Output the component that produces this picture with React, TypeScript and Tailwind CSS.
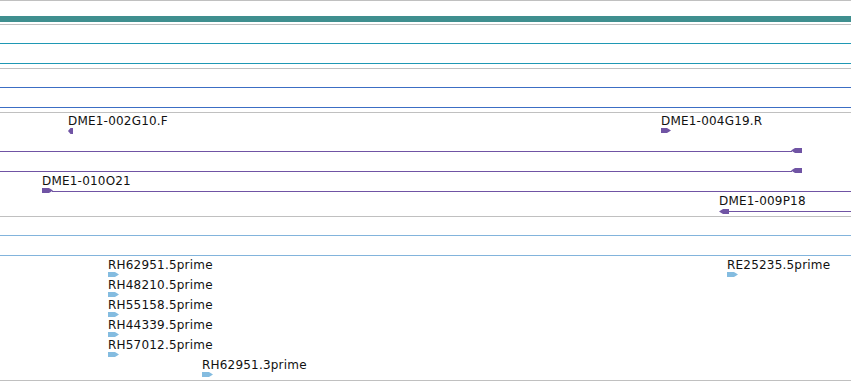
const purple = '#7054a4'
const lightBlue = '#84bce0'

type Dir = 'left' | 'right'

function Arrow({ dir, w, h, color, x, y }: { dir: Dir; w: number; h: number; color: string; x: number; y: number }) {
  const tip = Math.min(4, w / 2)
  const pts =
    dir === 'right'
      ? `0,0 ${w - tip},0 ${w},${h / 2} ${w - tip},${h} 0,${h}`
      : `${w},0 ${tip},0 0,${h / 2} ${tip},${h} ${w},${h}`
  return (
    <svg className="absolute" style={{ left: x, top: y }} width={w} height={h} viewBox={`0 0 ${w} ${h}`}>
      <polygon points={pts} fill={color} />
    </svg>
  )
}

function Label({ x, y, text }: { x: number; y: number; text: string }) {
  return (
    <div
      className="absolute whitespace-nowrap text-[12px] leading-[14px] tracking-[0.2px] text-[#111] font-['DejaVu_Sans',sans-serif]"
      style={{ left: x, top: y }}
    >
      {text}
    </div>
  )
}

function HLine({ x, y, w, color }: { x: number; y: number; w: number; color: string }) {
  return <div className="absolute h-px" style={{ left: x, top: y, width: w, background: color }} />
}

const estRows = [
  { x: 108, text: 'RH62951.5prime' },
  { x: 108, text: 'RH48210.5prime' },
  { x: 108, text: 'RH55158.5prime' },
  { x: 108, text: 'RH44339.5prime' },
  { x: 108, text: 'RH57012.5prime' },
  { x: 202, text: 'RH62951.3prime' },
]

export default function App() {
  return (
    <div className="w-[851px] h-[381px] bg-white overflow-hidden flex flex-col">
      <div className="h-px bg-[#c0c0c0]" />
      <div className="h-[15px]" />
      <div className="h-[6px] bg-[#3f8f8f]" />
      <div className="h-[2px]" />
      <div className="h-px bg-[#c0c0c0]" />
      <div className="h-[18px]" />
      <div className="h-px bg-[#1f98b4]" />
      <div className="h-[19px]" />
      <div className="h-px bg-[#1f98b4]" />
      <div className="h-[4px]" />
      <div className="h-px bg-[#c0c0c0]" />
      <div className="h-[18px]" />
      <div className="h-px bg-[#3c6ec4]" />
      <div className="h-[19px]" />
      <div className="h-px bg-[#3c6ec4]" />
      <div className="h-[4px]" />
      <div className="h-px bg-[#c0c0c0]" />

      {/* BAC ends track */}
      <div className="relative h-[103px] shrink-0">
        <Label x={68} y={1} text="DME1-002G10.F" />
        <Arrow dir="left" w={5} h={6} color={purple} x={68} y={15} />
        <Label x={661} y={1} text="DME1-004G19.R" />
        <Arrow dir="right" w={10} h={5} color={purple} x={661} y={15} />

        <HLine x={0} y={38} w={792} color={purple} />
        <Arrow dir="left" w={11} h={5} color={purple} x={791} y={35} />
        <HLine x={0} y={58} w={792} color={purple} />
        <Arrow dir="left" w={11} h={5} color={purple} x={791} y={55} />

        <Label x={42} y={61} text="DME1-010O21" />
        <Arrow dir="right" w={11} h={5} color={purple} x={42} y={75} />
        <HLine x={52} y={78} w={799} color={purple} />

        <Label x={719} y={81} text="DME1-009P18" />
        <Arrow dir="left" w={10} h={5} color={purple} x={719} y={96} />
        <HLine x={728} y={98} w={123} color={purple} />
      </div>

      <div className="h-px bg-[#c0c0c0]" />
      <div className="h-[18px]" />
      <div className="h-px bg-[#82b4dc]" />
      <div className="h-[19px]" />
      <div className="h-px bg-[#82b4dc]" />

      {/* EST track */}
      <div className="relative h-[124px] shrink-0">
        {estRows.map((r, i) => (
          <div key={r.text}>
            <Label x={r.x} y={2 + i * 20} text={r.text} />
            <Arrow dir="right" w={11} h={5} color={lightBlue} x={r.x} y={16 + i * 20} />
          </div>
        ))}
        <Label x={727} y={2} text="RE25235.5prime" />
        <Arrow dir="right" w={11} h={5} color={lightBlue} x={727} y={16} />
      </div>

      <div className="h-px bg-[#c0c0c0]" />
    </div>
  )
}
